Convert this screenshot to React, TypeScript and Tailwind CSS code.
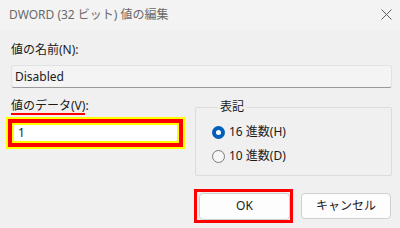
import React from 'react';

const FONT = "font-['Noto_Sans','Noto_Sans_CJK_JP',sans-serif]";

function CloseIcon() {
  return (
    <svg width="11" height="11" viewBox="0 0 11 11" className="block">
      <path d="M0.5 0.5 L10.5 10.5 M10.5 0.5 L0.5 10.5" stroke="#5f5f5f" strokeWidth="1" fill="none" />
    </svg>
  );
}

function Radio({ checked, label }: { checked?: boolean; label: string }) {
  return (
    <label className="flex items-center h-[16px] gap-[4px]">
      {checked ? (
        <span className="w-[13px] h-[13px] rounded-full bg-[#005fb8] flex items-center justify-center">
          <span className="w-[5px] h-[5px] rounded-full bg-white" />
        </span>
      ) : (
        <span className="w-[13px] h-[13px] rounded-full border border-[#7a7a7a] bg-[#f6f6f6]" />
      )}
      <span className="text-[12px] leading-[16px] text-[#1b1b1b]">{label}</span>
    </label>
  );
}

export default function App() {
  return (
    <div className={`w-[400px] h-[228px] overflow-hidden bg-[#f0f0f0] flex flex-col ${FONT}`}>
      {/* Title bar */}
      <div className="h-[30px] shrink-0 bg-[#f3f3f3] flex items-center justify-between pl-[9px] pr-[8px]">
        <span className="text-[12px] leading-[16px] text-[#6a6a6a]">DWORD (32 ビット) 値の編集</span>
        <span className="-mt-[1px]"><CloseIcon /></span>
      </div>

      {/* Body */}
      <div className="flex flex-col pl-[11px] pr-[8px]">
        <div className="mt-[11px] text-[12px] leading-[17px] text-[#1b1b1b]">値の名前(N):</div>
        <div className="mt-[7px] h-[23px] rounded-[3px] border border-[#e2e2e2] border-b-[#9a9a9a] bg-[#f4f4f4] flex items-center pl-[3px] text-[12px] text-[#1b1b1b]">
          Disabled
        </div>

        <div className="flex items-start mt-[10px]">
          {/* Value */}
          <div className="w-[174px] flex flex-col">
            <div className="flex text-[12px] leading-[15px] text-[#1b1b1b]">
              <span className="inline-block border-b-2 border-[#ff0000]">値のデータ(V)</span>
              <span>:</span>
            </div>
            <div className="mt-[2px] -ml-[5px] w-[179px] border-2 border-[#ffff00]">
              <div className="border-4 border-[#ff0000]">
                <div className="border-2 border-[#ffff00] bg-white h-[20px] flex items-center pl-[4px] text-[12px] text-[#1b1b1b]">
                  1
                </div>
              </div>
            </div>
          </div>

          {/* Radix group */}
          <fieldset className="ml-[10px] mt-[1px] w-[197px] border border-[#dcdcdc] rounded-[2px] pl-[16px] pb-[11px]">
            <legend className="ml-[6px] px-[2px] text-[12px] leading-[16px] text-[#1b1b1b]">表記</legend>
            <div className="mt-[9px] flex flex-col gap-[8px]">
              <Radio checked label="16 進数(H)" />
              <Radio label="10 進数(D)" />
            </div>
          </fieldset>
        </div>

        {/* Buttons */}
        <div className="flex justify-end items-center mt-[13px] pr-[1px]">
          <div className="border-[3px] border-[#ff0000] pl-[2px]">
            <button className="w-[91px] h-[27px] rounded-[4px] border border-[#d0d0d0] bg-[#fdfdfd] text-[12px] text-[#1b1b1b]">
              OK
            </button>
          </div>
          <button className="ml-[8px] w-[90px] h-[26px] rounded-[4px] border border-[#d0d0d0] bg-[#fdfdfd] text-[12px] text-[#1b1b1b]">
            キャンセル
          </button>
        </div>
      </div>
    </div>
  );
}
